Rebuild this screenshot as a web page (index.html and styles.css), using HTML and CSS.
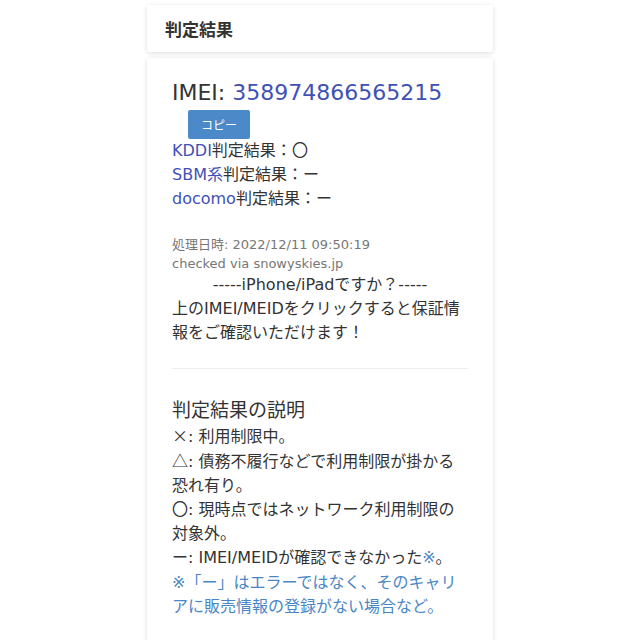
FILE: index.html
```html
<!DOCTYPE html>
<html lang="ja">
<head>
<meta charset="utf-8">
<link rel="stylesheet" href="styles.css">
</head>
<body>
<div class="page">
  <div class="card header">判定結果</div>
  <div class="card body">
    <div class="imei">IMEI: <a class="link">358974866565215</a></div>
    <div class="copy-row"><button class="copy">コピー</button></div>
    <div class="result"><a class="link">KDDI</a>判定結果：<span class="cjk">〇</span></div>
    <div class="result"><a class="link">SBM系</a>判定結果：ー</div>
    <div class="result"><a class="link">docomo</a>判定結果：ー</div>
    <div class="meta first">処理日時: 2022/12/11 09:50:19</div>
    <div class="meta">checked via snowyskies.jp</div>
    <div class="center">-----iPhone/iPadですか？-----</div>
    <div class="para">上のIMEI/MEIDをクリックすると保証情報をご確認いただけます！</div>
    <hr class="divider">
    <div class="sub">判定結果の説明</div>
    <div class="para"><span class="cjk">×</span>: 利用制限中。</div>
    <div class="para"><span class="cjk">△</span>: 債務不履行などで利用制限が掛かる恐れ有り。</div>
    <div class="para"><span class="cjk">〇</span>: 現時点ではネットワーク利用制限の対象外。</div>
    <div class="para">ー: IMEI/MEIDが確認できなかった<span class="note">※</span>。</div>
    <div class="para note">※「ー」はエラーではなく、そのキャリアに販売情報の登録がない場合など。</div>
  </div>
</div>
</body>
</html>
```
FILE: styles.css
```css
html, body {
  margin: 0;
  padding: 0;
  background: #ffffff;
}
body {
  font-family: "DejaVu Sans", "Noto Sans CJK JP", sans-serif;
  color: #333333;
}
.cjk {
  display: inline-block;
  font-family: "Noto Sans CJK JP", sans-serif;
  line-height: 16px;
  height: 16px;
}
.page {
  width: 346px;
  margin: 0 auto;
  padding-top: 5px;
  display: flex;
  flex-direction: column;
  gap: 6px;
}
.card {
  background: #ffffff;
  border-radius: 3px;
  box-shadow: 0 1px 5px rgba(0, 0, 0, 0.14);
}
.header {
  height: 47px;
  box-sizing: border-box;
  padding: 0 18px;
  display: flex;
  align-items: center;
  font-family: "Noto Sans CJK JP", sans-serif;
  font-size: 17px;
  font-weight: bold;
  color: #333;
}
.body {
  padding: 20px 25px 40px;
  min-height: 600px;
}
.link {
  color: #3f51b5;
  text-decoration: none;
}
.imei {
  font-size: 22px;
  line-height: 30px;
  color: #333;
}
.copy-row {
  padding-left: 16px;
  margin-top: 2px;
}
.copy {
  width: 62px;
  height: 29px;
  border: none;
  border-radius: 2px;
  background: #4b89c9;
  color: #fff;
  font-family: "Noto Sans CJK JP", sans-serif;
  font-size: 12px;
  padding: 0;
}
.result {
  font-size: 16px;
  line-height: 24px;
}
.meta {
  font-size: 13px;
  line-height: 19px;
  color: #777;
}
.meta.first {
  margin-top: 24px;
}
.center {
  text-align: center;
  font-size: 16px;
  line-height: 24px;
}
.para {
  font-size: 16px;
  line-height: 24.2px;
}
.divider {
  border: none;
  border-top: 1px solid #eeeeee;
  margin: 23px 0 26px;
}
.sub {
  font-size: 19px;
  line-height: 30px;
}
.note {
  color: #4a86c5;
}
```
